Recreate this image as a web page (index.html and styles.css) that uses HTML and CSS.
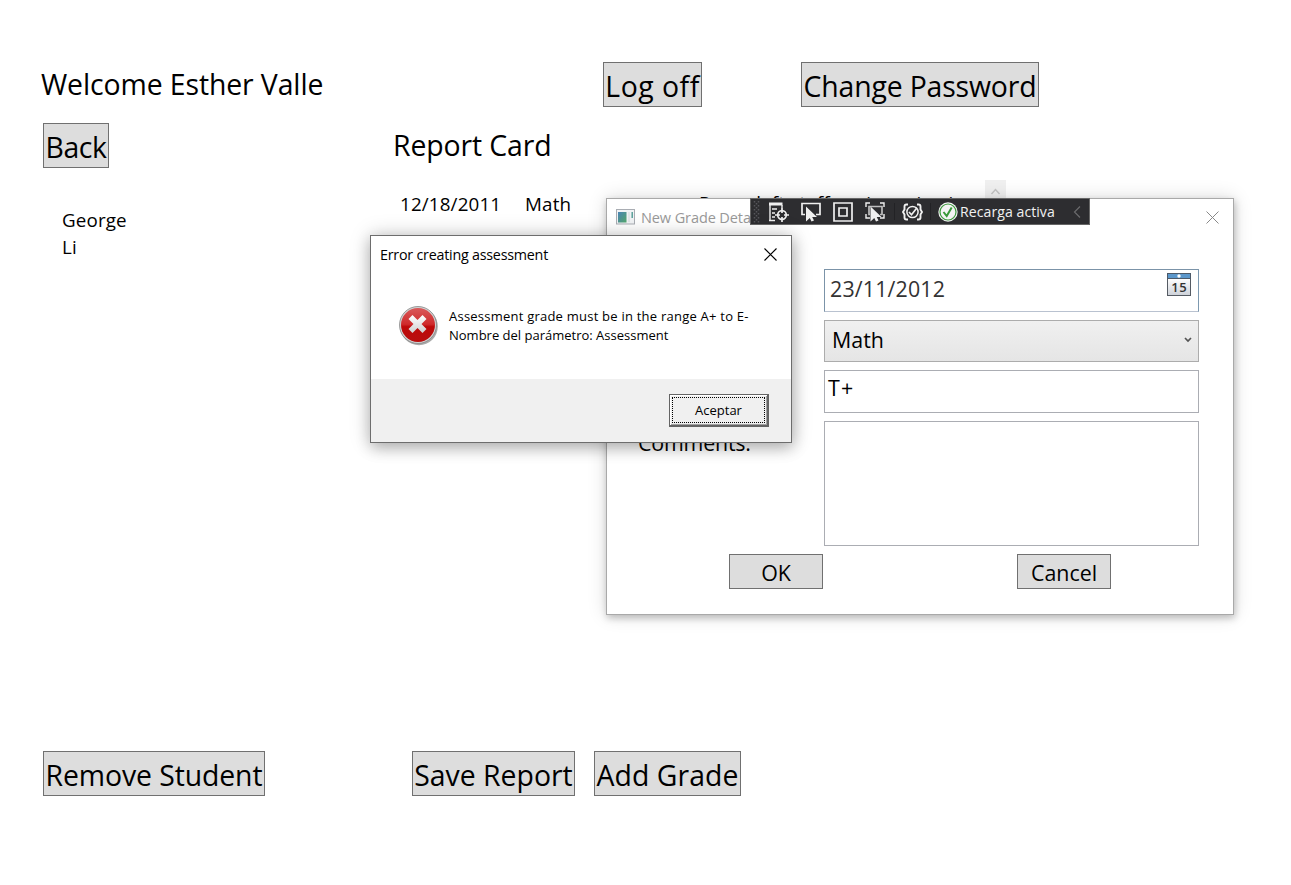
FILE: index.html
```html
<!DOCTYPE html>
<html lang="en">
<head>
<meta charset="utf-8">
<title>Report Card</title>
<link rel="stylesheet" href="styles.css">
</head>
<body>
<main class="app">
  <header class="top">
    <h1 class="heading welcome">Welcome Esther Valle</h1>
    <button class="btn logoff">Log off</button>
    <button class="btn password">Change Password</button>
  </header>
  <div class="subhead">
    <button class="btn back">Back</button>
    <h2 class="heading report">Report Card</h2>
  </div>
  <section class="content">
    <div class="student">George<br>Li</div>
    <div class="grade-row">
      <span class="date">12/18/2011</span>
      <span class="subject">Math</span>
      <span class="comment">Pages left staff again assign in</span>
    </div>
    <div class="scroll"><svg width="21" height="21"><path d="M6.5 14l4-4.500 4 4.500" fill="none" stroke="#c4c4c4" stroke-width="1.4"/></svg></div>
  </section>
  <footer class="actions">
    <button class="btn remove">Remove Student</button>
    <button class="btn save">Save Report</button>
    <button class="btn add">Add Grade</button>
  </footer>
</main>

<section class="window">
  <div class="titlebar">
    <svg class="app-icon" width="19" height="16" viewBox="0 0 19 16">
      <defs><linearGradient id="scr" x1="0" y1="0" x2="1" y2="1"><stop offset="0" stop-color="#4a83b5"/><stop offset="1" stop-color="#54a86c"/></linearGradient></defs>
      <rect x=".5" y=".5" width="18" height="14.5" fill="#f1f3f5" stroke="#a9adb3"/>
      <rect x="2" y="3" width="8.5" height="10.5" fill="url(#scr)"/>
      <path d="M12 3h2v10h-2z" fill="#e2e5e8"/><path d="M16.2 3v6" stroke="#4f9a93" stroke-width="1.4"/>
    </svg>
    <span class="window-title">New Grade Details</span>
    <svg class="close" width="13" height="13"><path d="M.5.5l12 12M12.5.5l-12 12" stroke="#888" stroke-width="1"/></svg>
  </div>
  <form class="form">
    <label class="label">Comments:</label>
    <div class="fields">
      <div class="field datepicker"><span class="datetext">23/11/2012</span>
        <svg width="24" height="23" viewBox="0 0 24 23">
          <defs><linearGradient id="cal" x1="0" y1="0" x2="0" y2="1"><stop offset="0" stop-color="#fff"/><stop offset="1" stop-color="#cdd1d8"/></linearGradient></defs>
          <rect x=".5" y="5.5" width="23" height="17" fill="url(#cal)" stroke="#555b63"/>
          <rect x=".5" y=".5" width="23" height="5" fill="#5b97cb" stroke="#4c5968"/>
          <circle cx="12" cy="3" r="1.7" fill="#fff"/>
          <text x="12.3" y="18.5" text-anchor="middle" class="calnum">15</text>
        </svg>
      </div>
      <div class="field combo">Math<svg width="8" height="6"><path d="M1 1l3 3 3-3" fill="none" stroke="#555" stroke-width="1.7"/></svg></div>
      <div class="field grade">T+</div>
      <div class="field memo"></div>
    </div>
  </form>
  <div class="window-actions">
    <button type="button" class="small-btn">OK</button>
    <button type="button" class="small-btn">Cancel</button>
  </div>
</section>

<div class="toolbar">
  <svg width="190" height="25" viewBox="751 199 190 25" fill="none" stroke="#f0f0f0" stroke-width="1.7">
    <path d="M754.5 201v22M758.5 201v22" stroke="#56565a" stroke-width="1.5" stroke-dasharray="1.5 2.5"/>
    <path d="M756.5 203v20" stroke="#56565a" stroke-width="1.5" stroke-dasharray="1.5 2.5"/>
    <path d="M769 204h13.5" stroke-width="3"/><path d="M770 205v15M772 209h5M772 213h3M772 217h3M769 220.500h6M782 205v3" stroke-width="1.4"/>
    <circle cx="782" cy="215" r="4.300"/><path d="M782 208v5M782 217v5M775 215h5M784 215h5"/>
    <path d="M805 214.500h-3v-11h18v11h-4"/><path d="M806 206.500v15l3.800-3.500 1.700 3.500 2.500-1-1.800-3.500h4.800z" fill="#f0f0f0" stroke="none"/>
    <path d="M834 203h18v18h-18zM839 208h8v8h-8z"/>
    <path d="M866 207v-4h4M880 203h4v4M866 214v4h4M880 218h4v-4" stroke-width="1.400"/>
    <path d="M870 214.500h-1v-8h13v8h-2" stroke="#bebebe"/><path d="M870.500 206.500v15l3.800-3.500 1.700 3.500 2.500-1-1.800-3.500h4.800z" fill="#f0f0f0" stroke="none"/>
    <path d="M894.500 203v17M930.500 203v17" stroke="#222225" stroke-width="1"/>
    <path d="M908 204.500h-1.500q-2 0-2 2v3l-1.500 2.500 1.500 2.500v3q0 2 2 2h1.500M917 204.500h1.500q2 0 2 2v3l1.500 2.500-1.500 2.500v3q0 2-2 2H917" stroke-width="1.900"/>
    <circle cx="912.500" cy="212" r="5.600" stroke-width="1.500"/><path d="M909 212l2.500 2.800 5.500-7" stroke-width="1.700"/>
  </svg>
  <svg class="check" width="20" height="20" viewBox="0 0 20 20"><circle cx="10" cy="10" r="9.700" fill="#f4f4f4"/><circle cx="10" cy="10" r="8" fill="none" stroke="#3c9a3c" stroke-width="1.200"/><path d="M5.500 10l3.200 4 5-8.500" fill="none" stroke="#389938" stroke-width="2"/></svg>
  <span class="reload">Recarga activa</span>
  <svg class="chev" width="8" height="12"><path d="M7 .5L1.500 6 7 11.500" fill="none" stroke="#6a6a6c" stroke-width="1.200"/></svg>
</div>

<section class="dialog" role="alertdialog">
  <div class="dialog-head"><span>Error creating assessment</span>
    <svg width="13" height="13"><path d="M.5.5l12 12M12.500.5l-12 12" stroke="#000" stroke-width="1.100"/></svg>
  </div>
  <div class="dialog-body">
    <svg width="40" height="40" viewBox="0 0 40 40">
      <defs>
        <linearGradient id="red" x1="0" y1="0" x2="0" y2="1"><stop offset="0" stop-color="#d9595a"/><stop offset=".48" stop-color="#cf2a2b"/><stop offset=".55" stop-color="#bd0909"/><stop offset="1" stop-color="#b80e0e"/></linearGradient>
        <linearGradient id="x" x1="0" y1="0" x2="0" y2="1"><stop offset="0" stop-color="#fff"/><stop offset="1" stop-color="#cfcfcf"/></linearGradient>
      </defs>
      <circle cx="20" cy="20.500" r="18.800" fill="#aaa"/>
      <circle cx="19" cy="19" r="18.500" fill="#d3d3d3" stroke="#858585" stroke-width=".8"/>
      <circle cx="19" cy="19" r="17" fill="url(#red)"/>
      <path d="M9.500 13l4-4 5 5 5-5 4 4-5 5 5 5-4 4-5-5-5 5-4-4 5-5z" fill="url(#x)"/>
    </svg>
    <p class="message"><span class="line1">Assessment grade must be in the range A+ to E-</span><br><span class="line2">Nombre del parámetro: Assessment</span></p>
  </div>
  <div class="dialog-foot"><button class="accept"><span>Aceptar</span></button></div>
</section>
</body>
</html>
```
FILE: styles.css
```css
* { box-sizing: border-box; }
body {
  margin: 0;
  width: 1291px;
  height: 885px;
  overflow: hidden;
  background: #fff;
  color: #000;
  font-family: "Open Sans", "Noto Sans", sans-serif;
}
button { font-family: inherit; color: #000; padding: 0; margin: 0; border-radius: 0; white-space: nowrap; }
svg { display: block; flex: none; }

.app { height: 885px; padding: 62px 0 0 41px; display: flex; flex-direction: column; }
.heading { margin: 0; font-size: 28.4px; line-height: 45px; font-weight: 400; white-space: nowrap; letter-spacing: -.1px; }
.btn { height: 45px; border: 1px solid #707070; background: #ddd; font-size: 28.4px; line-height: 47px; flex: none; display: flex; justify-content: center; }
.top, .subhead, .actions { display: flex; height: 45px; flex: none; }
.welcome { width: 562px; }
.logoff { width: 99px; margin-right: 99px; letter-spacing: .5px; }
.password { width: 238px; letter-spacing: -.16px; }
.subhead { margin-top: 16px; }
.back { width: 66px; margin: 0 284px 0 2px; letter-spacing: -.4px; }
.content { display: flex; margin-top: 12px; height: 571px; font-size: 18.8px; line-height: 27px; white-space: nowrap; }
.student { flex: none; width: 359px; padding: 27px 0 0 21px; letter-spacing: .15px; }
.grade-row { display: flex; flex: none; width: 585px; padding-top: 11px; letter-spacing: .15px; }
.date, .subject { flex: none; }
.date { width: 125px; }
.subject { width: 174px; }
.comment { line-height: 25px; }
.scroll { flex: none; width: 21px; height: 30px; background: #f0f0f0; }
.remove { width: 222px; margin: 0 147px 0 2px; letter-spacing: -.1px; }
.save { width: 163px; margin-right: 19px; }
.add { width: 147px; letter-spacing: .08px; }

.window {
  position: absolute; left: 606px; top: 198px; width: 628px; height: 417px;
  border: 1px solid #a9a9a9; background: #fff;
  box-shadow: 1px 3px 7px rgba(0,0,0,.22), 0 0 18px rgba(0,0,0,.14);
}
.titlebar { display: flex; align-items: flex-start; height: 70px; padding: 10px 14px 0 9px; }
.window-title { margin-left: 6px; font-size: 14.5px; line-height: 18px; color: #999; letter-spacing: -.1px; }
.close { margin: 2px 0 0 auto; }
.form { display: flex; margin: 0; padding-left: 31px; font-size: 21.4px; }
.label { width: 186px; padding-top: 159px; line-height: 30px; letter-spacing: -.2px; }
.fields { display: grid; grid-template-rows: 43px 42px 43px 125px; row-gap: 8px; width: 375px; }
.field { border: 1px solid #abadb3; line-height: 34px; padding-left: 3px; }
.grade { letter-spacing: 1.2px; }
.datepicker { display: flex; justify-content: space-between; padding: 4px 7px 0 5px; border-color: #7b93a8 #7d99b0 #b9c2d0 #7b93a8; color: #333; line-height: 29px; letter-spacing: .15px; }
.datepicker svg { margin-top: -1px; }
.calnum { font: 600 13px "Open Sans", sans-serif; fill: #333; letter-spacing: .6px; }
.combo { display: flex; justify-content: space-between; align-items: center; border-color: #acacac; background: linear-gradient(#f0f0f0, #e5e5e5); padding: 0 6px 2px 7px; line-height: 38px; }
.window-actions { display: flex; gap: 194px; padding: 8px 0 0 122px; }
.small-btn { width: 94px; height: 35px; border: 1px solid #707070; background: #ddd; font-size: 21.4px; line-height: 33px; padding-top: 1px; }

.toolbar { position: absolute; left: 750px; top: 198px; width: 340px; height: 27px; display: flex; align-items: center; border: 1px solid #666; background: #2d2d30; color: #f1f1f1; overflow: hidden; }
.check { margin-left: -3px; }
.reload { margin-left: 2px; width: 113px; font-size: 14.1px; line-height: 24px; white-space: nowrap; letter-spacing: .05px; }

.dialog {
  position: absolute; left: 370px; top: 235px; width: 422px; height: 208px;
  border: 1px solid #6d6d6d; background: #fff;
  box-shadow: 1px 5px 14px rgba(0,0,0,.24), 0 0 20px rgba(0,0,0,.18);
}
.dialog-head { display: flex; justify-content: space-between; height: 70px; padding: 9px 14px 0 9px; font-size: 14.3px; line-height: 20px; letter-spacing: -.23px; }
.dialog-head svg { margin-top: 3px; }
.dialog-body { display: flex; height: 73px; padding-left: 28px; }
.message { margin: 1px 0 0 10px; font-size: 13px; line-height: 19px; white-space: nowrap; }
.line1 { letter-spacing: .23px; }
.dialog-foot { display: flex; justify-content: flex-end; height: 63px; background: #f0f0f0; padding: 15px 22px 0 0; }
.accept { width: 100px; height: 33px; padding: 2px; border: 1px solid #646464; border-right-width: 2px; border-bottom-width: 2px; background: #f0f0f0; box-shadow: inset 1px 1px #fff, inset -1px -1px #a0a0a0; font-size: 13px; }
.accept span { display: block; height: 26px; border: 1px dotted #000; line-height: 25px; }
```
